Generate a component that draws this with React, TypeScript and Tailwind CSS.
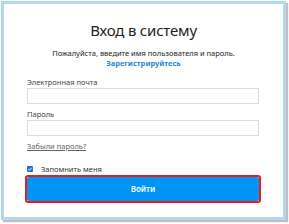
export default function App() {
  return (
    <div className="w-[289px] h-[224px] bg-white pl-[1px] pt-[1px]" style={{ fontFamily: '"Noto Sans", "Open Sans", sans-serif' }}>
      <div className="w-[285px] h-[219px] border-[3px] border-[#b3d7f2] bg-white shadow-[2px_2px_1px_rgba(0,0,0,0.25)] px-[23px] pt-[16px]">
        <h1 className="text-center text-[15px] tracking-[-0.2px] leading-[20px] text-[#222] font-normal">Вход в систему</h1>
        <p className="mt-[9px] text-center text-[7.5px] leading-[9px] text-[#222]">
          Пожалуйста, введите имя пользователя и пароль.
        </p>
        <p className="text-center text-[7.5px] leading-[10px] font-bold text-[#1a8ad8]">Зарегистрируйтесь</p>

        <label className="block mt-[9px] text-[7.5px] leading-[10px] text-[#444]">Электронная почта</label>
        <div className="mt-[1px] h-[16px] w-[232px] border border-[#dcdcdc]"></div>

        <label className="block mt-[5px] text-[7.5px] leading-[10px] text-[#444]">Пароль</label>
        <div className="mt-[1px] h-[16px] w-[232px] border border-[#dcdcdc]"></div>

        <a className="block mt-[5px] text-[7.5px] leading-[10px] text-[#666] underline">Забыли пароль?</a>

        <div className="mt-[13px] flex items-center gap-[8px]">
          <span className="w-[6px] h-[6px] rounded-[1px] bg-[#1f6ed6] flex items-center justify-center">
            <svg viewBox="0 0 10 10" className="w-[6px] h-[6px]">
              <path d="M2 5 L4.2 7.2 L8 2.8" stroke="white" strokeWidth="1.6" fill="none" />
            </svg>
          </span>
          <span className="text-[7.5px] leading-[10px] text-[#333]">Запомнить меня</span>
        </div>

        <button className="mt-[1px] -ml-[2px] w-[236px] h-[28px] rounded-[3px] border-2 border-[#f01818] p-0">
          <span className="flex w-full h-full rounded-[2px] bg-[#0094f5] items-center justify-center text-white text-[8px] font-semibold">
            Войти
          </span>
        </button>
      </div>
    </div>
  );
}
